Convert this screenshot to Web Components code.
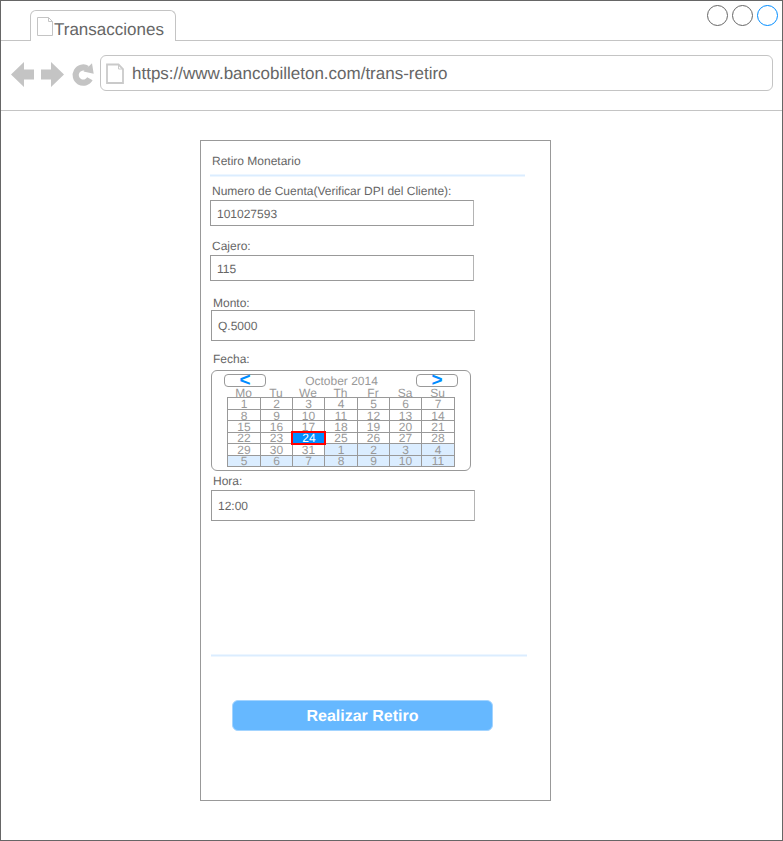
<!DOCTYPE html>
<html lang="es">
<head>
<meta charset="utf-8">
<title>Transacciones</title>
<style>
html,body{margin:0;background:#fff}
body{width:783px;height:841px;overflow:hidden;font-family:"Liberation Sans",Arial,sans-serif;color:#666;text-rendering:geometricPrecision}
</style>
</head>
<body>
<browser-window>
  <browser-tabs slot="tabs">Transacciones</browser-tabs>
  <browser-toolbar slot="toolbar">https://www.bancobilleton.com/trans-retiro</browser-toolbar>
  <form-panel>
    <panel-title>Retiro Monetario</panel-title>
    <form-field label="Numero de Cuenta(Verificar DPI del Cliente):" style="--gap-top:7px;--h:26px;--label-h:16px">101027593</form-field>
    <form-field label="Cajero:" style="--gap-top:13px;--h:26px;--label-h:16px">115</form-field>
    <form-field label="Monto:" style="--gap-top:15px;--h:31px;--x:1px;--label-h:14px">Q.5000</form-field>
    <date-picker label="Fecha:" month="October 2014"></date-picker>
    <form-field label="Hora:" style="--gap-top:3px;--h:31px;--x:1px;--label-h:16px">12:00</form-field>
    <action-bar>Realizar Retiro</action-bar>
  </form-panel>
</browser-window>
<script>
const define = (name, html, setup) => {
  const t = document.createElement('template');
  t.innerHTML = html;
  customElements.define(name, class extends HTMLElement {
    constructor() {
      super();
      this.attachShadow({mode: 'open'}).append(t.content.cloneNode(true));
    }
    connectedCallback() { if (setup) setup(this, this.shadowRoot); }
  });
};

define('browser-window', `<style>
:host{display:flex;flex-direction:column;box-sizing:border-box;width:783px;height:841px;border:1px solid #666;background:#fff}
main{padding:29px 0 0 199px}
</style><slot name="tabs"></slot><slot name="toolbar"></slot><main><slot></slot></main>`);

define('browser-tabs', `<style>
:host{display:flex;height:40px;font-size:17px}
.l,.r{border-bottom:1px solid #c4c4c4}
.l{width:29px}
.r{flex:1;display:flex;justify-content:flex-end;gap:3px;padding:3px 4px 0 0}
.tab{box-sizing:border-box;width:146px;height:31px;margin-top:9px;border:1px solid #c4c4c4;border-bottom:0;border-radius:6px 6px 0 0;display:flex;padding:6px 0 0 6px}
.tab svg{flex:none}
.tab span{line-height:20px;margin-top:3px;white-space:nowrap}
svg{display:block}
.r svg{width:22px;height:22px}
</style>
<div class="l"></div>
<div class="tab"><svg width="17" height="20" fill="none" stroke="#c4c4c4"><path d="M.5 .5H11.5L15.5 4.5V18.5H.5ZM11.5 .5V4.5H15.5"/></svg><span><slot></slot></span></div>
<div class="r">
<svg fill="none" stroke="#666"><circle cx="11.5" cy="11.5" r="10"/></svg>
<svg fill="none" stroke="#666"><circle cx="11.5" cy="11.5" r="10"/></svg>
<svg fill="none" stroke="#008cff"><circle cx="11.5" cy="11.5" r="10"/></svg>
</div>`);

define('browser-toolbar', `<style>
:host{display:flex;box-sizing:border-box;height:70px;border-bottom:1px solid #c4c4c4;padding:14px 9px 0 9px}
.nav{display:block;flex:none;margin-top:0}
.url{box-sizing:border-box;flex:1;height:36px;border:1px solid #c4c4c4;border-radius:6px;display:flex;align-items:center;padding-left:5px;font-size:17px}
.url svg{flex:none;margin-right:7px}
.url span{line-height:20px;margin-top:1px}
</style>
<svg class="nav" width="90" height="36" viewBox="10 55 90 36" fill="#c4c4c4"><path d="M11 74.5L24 62V69.5H34V79.5H24V87ZM64 74.5L51 62V69.5H41V79.5H51V87Z"/><path d="M89.9 78.8A7.6 7.6 0 1 1 87.2 68.6" fill="none" stroke="#c4c4c4" stroke-width="6.2"/><path d="M92 63.3L93.7 73.8L83.5 71.5Z"/></svg>
<div class="url"><svg width="19" height="21" fill="none" stroke="#cacaca"><path stroke-width="1.8" d="M1 1.5H12.5L17 6V20H1Z"/><path d="M12.5 1.5V6H17"/></svg><span><slot></slot></span></div>`);

define('form-panel', `<style>
:host{display:flex;flex-direction:column;box-sizing:border-box;width:351px;height:661px;border:1px solid #999;padding-left:9px;font-size:12px}
</style><slot></slot>`);

define('panel-title', `<style>
:host{display:block;box-sizing:border-box;width:315px;height:36px;background:linear-gradient(transparent 33px,#edf6ff 33px 34px,#dbedff 34px 35px,#edf6ff 35px);padding:13px 0 0 2px;line-height:14px}
</style><slot></slot>`);

define('form-field', `<style>
:host{display:block;padding-left:var(--x,0);margin-top:var(--gap-top)}
.label{height:var(--label-h);line-height:15px;padding-left:2px}
:host([label^="Numero"]) .label,:host([label="Hora:"]) .label{line-height:14px}
.box{box-sizing:border-box;width:264px;height:var(--h);border:1px solid #999;border-right-color:#b4b4b4;display:flex;align-items:center;padding:1px 0 0 6px;line-height:14px}
</style><div class="label"></div><div class="box"><slot></slot></div>`,
(el, root) => root.querySelector('.label').textContent = el.getAttribute('label'));

define('date-picker', `<style>
:host{display:block;padding-left:1px;margin-top:11px;color:#999}
.label{height:18px;line-height:14px;padding-left:2px;color:#666}
.cal{box-sizing:border-box;width:260px;height:101px;border:1px solid #999;border-radius:6px;padding:3px 12px 0}
.head{display:grid;grid-template-columns:42px 1fr 42px;height:14px;text-align:center}
.month{line-height:15px;padding-left:1px}
.btn{box-sizing:border-box;height:13px;border:1px solid #999;border-radius:4px;color:#008cff;font-weight:bold;font-size:19px;line-height:12px}
.days,.grid{display:grid;grid-template-columns:33px 32px 32px 33px 32px 32px 33px;text-align:center;margin-left:3px;width:228px}
.days{height:9px;line-height:11px}
.grid{grid-template-rows:12px 11px 12px 11px 12px 11px;box-sizing:border-box;border-right:1px solid #999;border-bottom:1px solid #999;height:70px}
.grid div{border:solid #999;border-width:1px 0 0 1px;line-height:13px;min-height:0;min-width:0}
.grid .up{line-height:11px}
.grid .next{background:#dbedff}
.grid .on{background:#008cff;color:#fff;outline:2px solid #f00;outline-offset:-1px;border-color:transparent;position:relative;margin-right:-1px;margin-bottom:-1px}
</style>
<div class="label"></div>
<div class="cal"><div class="head"><div class="btn">&lt;</div><div class="month"></div><div class="btn">&gt;</div></div>
<div class="days"><span>Mo</span><span>Tu</span><span>We</span><span>Th</span><span>Fr</span><span>Sa</span><span>Su</span></div>
<div class="grid"></div></div>`,
(el, root) => {
  root.querySelector('.label').textContent = el.getAttribute('label');
  root.querySelector('.month').textContent = el.getAttribute('month');
  const grid = root.querySelector('.grid');
  for (let i = 1; i <= 42; i++) {
    const d = document.createElement('div');
    d.textContent = i > 31 ? i - 31 : i;
    if (i > 31) d.classList.add('next');
    if (i === 24) d.classList.add('on');
    if (i > 35 || (i > 21 && i < 29)) d.classList.add('up');
    grid.append(d);
  }
});

define('action-bar', `<style>
:host{display:block;box-sizing:border-box;width:316px;margin:133px 0 0 1px;background:linear-gradient(#edf6ff 1px,#dbedff 1px 2px,#edf6ff 2px 3px,transparent 3px);padding:46px 0 0 21px}
button{display:block;box-sizing:border-box;width:261px;height:31px;border:1px solid #a3d4ff;border-radius:6px;background:#66b8ff;color:#fff;font:bold 16px/20px "Liberation Sans",Arial,sans-serif;padding:3px 0 0;text-rendering:inherit}
</style><button><slot></slot></button>`);
</script>
</body>
</html>
